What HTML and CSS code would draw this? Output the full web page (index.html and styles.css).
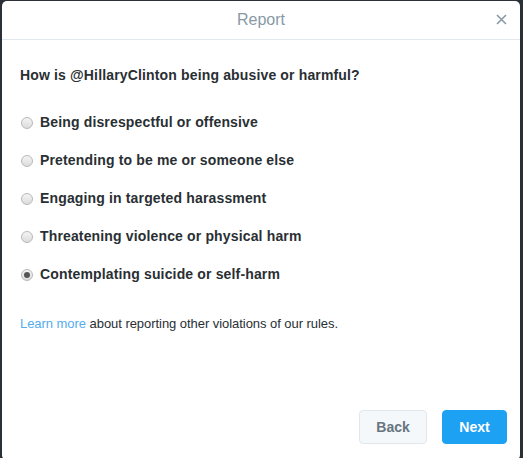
FILE: index.html
```html
<!DOCTYPE html>
<html lang="en">
<head>
    <meta charset="UTF-8">
    <title>Report</title>
    <link rel="stylesheet" href="styles.css">
</head>
<body>
    <div class="modal">
        <div class="modal-header">
            <h2 class="modal-title">Report</h2>
            <button type="button" class="close-btn" aria-label="Close">
                <svg width="11" height="11" viewBox="0 0 11 11"><path d="M1 1L10 10M10 1L1 10" stroke="#8899a6" stroke-width="1.6" fill="none"/></svg>
            </button>
        </div>
        <form class="modal-body">
            <p class="question">How is @HillaryClinton being abusive or harmful?</p>
            <div class="options">
                <label class="option"><input type="radio" name="reason"> Being disrespectful or offensive</label>
                <label class="option"><input type="radio" name="reason"> Pretending to be me or someone else</label>
                <label class="option"><input type="radio" name="reason"> Engaging in targeted harassment</label>
                <label class="option"><input type="radio" name="reason"> Threatening violence or physical harm</label>
                <label class="option"><input type="radio" name="reason" checked> Contemplating suicide or self-harm</label>
            </div>
            <p class="learn"><a href="#">Learn more</a> about reporting other violations of our rules.</p>
        </form>
        <div class="modal-footer">
            <button type="button" class="btn btn-back">Back</button>
            <button type="button" class="btn btn-next">Next</button>
        </div>
    </div>
</body>
</html>
```

FILE: styles.css
```css
html, body {
    margin: 0;
    height: 100%;
}
body {
    background-color: #2b3036;
    padding: 1px 3px 0 2px;
    box-sizing: border-box;
    font-family: "Liberation Sans", Arial, sans-serif;
    color: #292f33;
}
.modal {
    background: #fff;
    border-radius: 5px 5px 4px 4px;
    height: 458px;
    display: flex;
    flex-direction: column;
}
.modal-header {
    height: 38px;
    border-bottom: 1px solid #e1e8ed;
    display: flex;
    align-items: center;
    justify-content: center;
    position: relative;
}
.modal-title {
    margin: 0;
    font-size: 16px;
    font-weight: normal;
    color: #8899a6;
}
.close-btn {
    position: absolute;
    right: 13px;
    top: 13px;
    background: none;
    border: none;
    padding: 0;
    line-height: 0;
    cursor: pointer;
}
.modal-body {
    padding: 0 18px;
    flex: 1;
}
.question {
    margin: 27px 0 0;
    font-size: 14px;
    letter-spacing: 0.15px;
    font-weight: bold;
    line-height: 16px;
}
.options {
    margin-top: 31px;
    display: flex;
    flex-direction: column;
    gap: 21px;
}
.option {
    display: flex;
    align-items: center;
    font-size: 14px;
    letter-spacing: 0.15px;
    font-weight: bold;
    line-height: 17px;
    cursor: pointer;
}
.option input {
    appearance: none;
    -webkit-appearance: none;
    width: 12px;
    height: 12px;
    margin: 0 7px 0 1px;
    border: 1px solid #b8b8b8;
    border-radius: 50%;
    background: linear-gradient(#f4f4f4, #dcdcdc);
    box-sizing: border-box;
    position: relative;
}
.option input:checked::after {
    content: "";
    position: absolute;
    left: 2px;
    top: 2px;
    width: 6px;
    height: 6px;
    border-radius: 50%;
    background: #555;
}
.learn {
    margin: 33px 0 0;
    font-size: 13px;
    letter-spacing: -0.05px;
    color: #292f33;
}
.learn a {
    color: #55acee;
    text-decoration: none;
}
.modal-footer {
    display: flex;
    justify-content: flex-end;
    gap: 15px;
    padding: 0 13px 15px 0;
}
.btn {
    font-family: "Liberation Sans", Arial, sans-serif;
    font-size: 14px;
    font-weight: bold;
    height: 34px;
    border-radius: 4px;
    cursor: pointer;
}
.btn-back {
    width: 68px;
    background: #f5f8fa;
    border: 1px solid #e1e8ed;
    color: #66757f;
}
.btn-next {
    width: 65px;
    background: #1da1f2;
    border: 1px solid #1da1f2;
    color: #fff;
}
```
